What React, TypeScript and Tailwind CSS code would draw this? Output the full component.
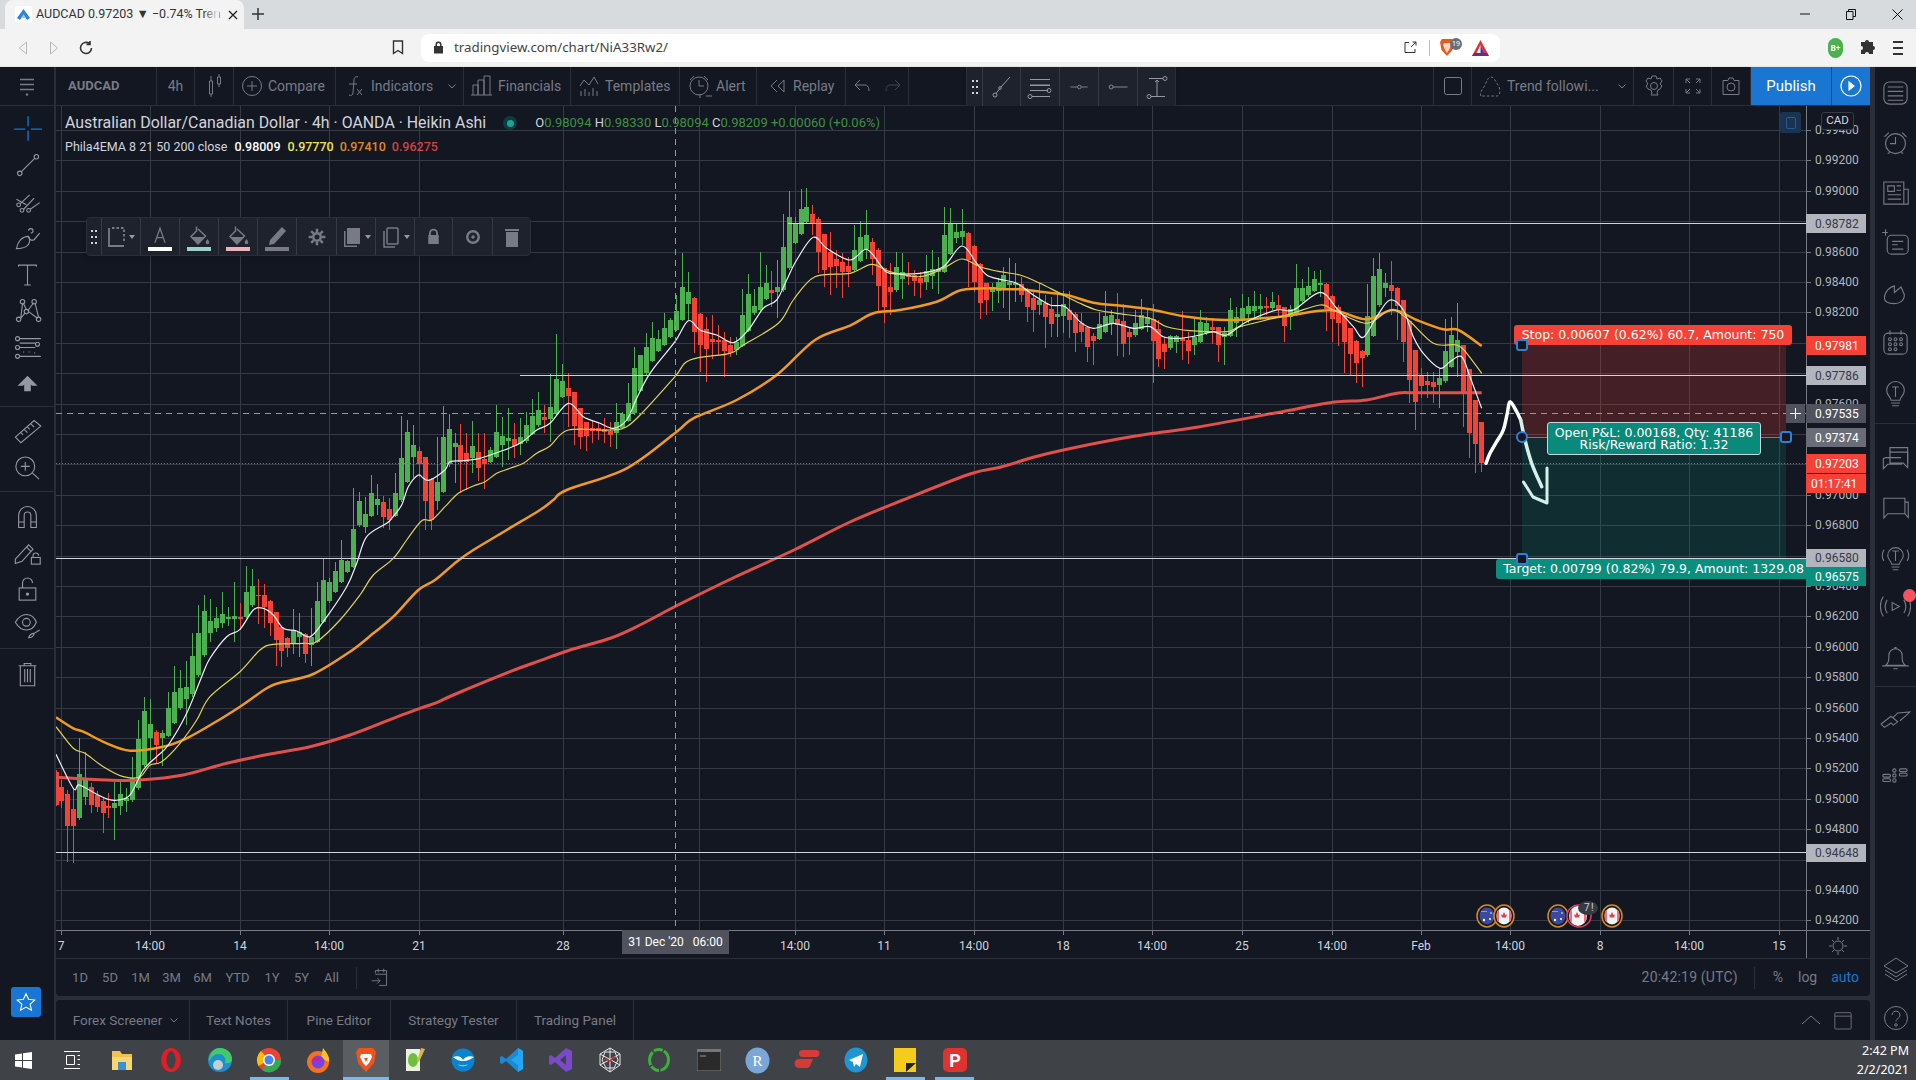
import type { ReactNode } from 'react'

type Pt = [number, number]

// candles are noted as [x, wickTop, bodyTop, bodyBottom, wickBottom, up], in 3x crop units
const leftCandles = [
  [50, 810, 815, 915, 918, 0], [64, 840, 862, 903, 925, 0], [82, 870, 882, 977, 1085, 0], [100, 865, 927, 977, 1090, 0],
  [118, 715, 823, 953, 960, 1], [136, 755, 833, 890, 915, 1], [154, 850, 862, 915, 938, 0], [172, 872, 885, 920, 935, 0],
  [190, 895, 903, 938, 998, 0], [206, 880, 918, 923, 955, 0], [223, 845, 908, 923, 1020, 1], [241, 845, 883, 917, 945, 1],
  [259, 865, 895, 903, 935, 1], [277, 770, 833, 900, 905, 1], [295, 660, 717, 865, 870, 1], [313, 592, 633, 795, 800, 1],
  [331, 597, 672, 715, 780, 1], [349, 690, 695, 735, 790, 0], [367, 690, 700, 714, 798, 1], [385, 575, 625, 707, 712, 1],
  [403, 497, 576, 668, 672, 1], [421, 510, 565, 625, 630, 1], [439, 482, 562, 596, 675, 1], [457, 400, 468, 582, 590, 1],
  [475, 315, 400, 525, 530, 1], [493, 285, 333, 465, 470, 1], [511, 297, 363, 398, 425, 1], [529, 320, 353, 383, 395, 1],
  [547, 277, 343, 368, 385, 1], [565, 320, 351, 356, 378, 1], [583, 247, 348, 357, 425, 1], [601, 310, 351, 356, 390, 0],
  [619, 198, 276, 352, 355, 1], [637, 207, 257, 315, 320, 1], [655, 237, 284, 288, 372, 0], [673, 252, 285, 320, 385, 0],
  [691, 300, 303, 370, 408, 0], [709, 335, 337, 420, 497, 0], [724, 378, 380, 452, 500, 0], [742, 410, 414, 443, 472, 0],
  [760, 327, 390, 432, 462, 1], [778, 340, 396, 412, 472, 1], [796, 400, 403, 462, 488, 0], [814, 323, 410, 435, 497, 1],
  [832, 247, 303, 425, 430, 1], [850, 178, 240, 365, 370, 1], [868, 235, 247, 303, 310, 1], [886, 185, 213, 275, 280, 1],
  [904, 120, 180, 245, 250, 1], [922, 180, 183, 215, 220, 1], [940, -36, 87, 200, 205, 1], [958, -25, 3, 75, 80, 1],
]

const midCandles = [
  [106, 680, 733, 770, 790, 1], [124, 615, 670, 737, 742, 1], [142, 642, 687, 706, 735, 1], [160, 677, 695, 741, 775, 0],
  [178, 685, 717, 750, 780, 0], [196, 610, 670, 737, 742, 1], [214, 438, 565, 690, 695, 1], [232, 450, 487, 635, 640, 1],
  [250, 465, 525, 560, 625, 1], [268, 530, 543, 583, 620, 0], [286, 560, 562, 692, 780, 0], [304, 625, 628, 750, 780, 0],
  [322, 500, 637, 693, 720, 1], [340, 408, 502, 665, 670, 1], [358, 432, 477, 583, 590, 1], [376, 490, 519, 530, 640, 1],
  [392, 462, 525, 575, 670, 0], [410, 490, 549, 575, 660, 0], [428, 453, 528, 565, 610, 1], [446, 490, 547, 595, 632, 0],
  [464, 490, 568, 582, 658, 0], [482, 530, 541, 575, 580, 1], [500, 405, 487, 560, 565, 1], [518, 440, 499, 525, 590, 1],
  [536, 415, 504, 512, 570, 1], [554, 458, 507, 528, 565, 0],
]

const rightCandles = [
  [62, 775, 832, 852, 885, 1], [80, 757, 796, 843, 848, 1], [98, 717, 767, 822, 826, 1], [116, 697, 751, 795, 800, 1],
  [134, 735, 771, 779, 820, 0], [152, 642, 742, 778, 845, 1], [170, 522, 658, 762, 766, 1], [188, 612, 663, 711, 715, 1],
  [206, 640, 685, 708, 800, 0], [224, 696, 697, 798, 855, 0], [242, 745, 745, 830, 868, 0], [260, 786, 787, 827, 872, 0],
  [278, 780, 805, 812, 850, 0], [296, 790, 805, 812, 840, 0], [314, 775, 808, 815, 850, 0], [332, 785, 812, 824, 862, 0],
  [350, 730, 787, 820, 868, 1], [368, 755, 762, 805, 808, 1], [386, 670, 730, 782, 785, 1], [404, 560, 625, 760, 764, 1],
  [422, 590, 585, 692, 696, 1], [440, 518, 561, 640, 644, 1], [458, 485, 535, 602, 606, 1], [476, 510, 538, 572, 576, 1],
  [494, 458, 505, 555, 559, 1], [512, 475, 480, 530, 534, 1], [530, 405, 453, 510, 514, 1], [548, 280, 380, 480, 484, 1],
  [566, 337, 396, 432, 480, 1], [584, 412, 415, 515, 580, 0], [602, 460, 462, 555, 635, 0], [620, 470, 507, 568, 665, 0],
  [638, 465, 538, 546, 598, 0], [656, 495, 541, 545, 585, 0], [674, 515, 541, 573, 650, 0], [692, 530, 555, 580, 590, 0],
  [710, 530, 545, 570, 585, 1], [728, 388, 465, 558, 562, 1], [746, 343, 403, 512, 516, 1], [764, 388, 438, 460, 465, 1],
  [782, 275, 381, 450, 455, 1], [800, 315, 369, 417, 420, 1], [814, 333, 391, 399, 440, 0], [832, 300, 381, 396, 475, 1],
  [850, 163, 262, 390, 395, 1], [868, 93, 171, 325, 330, 1], [886, 170, 190, 248, 252, 1], [904, 87, 147, 221, 225, 1],
  [919, 85, 141, 185, 190, 1], [937, 135, 163, 190, 225, 0], [955, 170, 178, 275, 340, 0], [973, 222, 223, 330, 380, 0],
  [991, 215, 276, 320, 405, 0], [1009, 270, 297, 318, 385, 0], [1027, 280, 307, 337, 415, 0], [1045, 290, 319, 337, 382, 0],
  [1063, 195, 270, 330, 335, 1], [1081, 183, 232, 302, 306, 1], [1099, 150, 225, 268, 298, 1], [1117, 235, 246, 297, 345, 0],
  [1135, 265, 271, 378, 455, 0], [1153, 325, 325, 440, 490, 0], [1171, 310, 381, 396, 465, 0], [1189, 275, 322, 390, 395, 1],
  [1207, 280, 336, 357, 418, 1], [1225, 305, 345, 350, 375, 0], [1243, 330, 346, 362, 408, 0], [1261, 335, 354, 370, 415, 0],
  [1279, 285, 334, 365, 390, 1], [1297, 270, 328, 348, 388, 1], [1315, 290, 328, 336, 402, 1], [1333, 140, 225, 335, 340, 1],
  [1351, 145, 189, 282, 286, 1], [1369, 190, 216, 234, 250, 1], [1387, 148, 213, 230, 255, 1], [1405, 215, 220, 300, 380, 0],
  [1423, 255, 258, 365, 395, 0], [1441, 310, 313, 430, 478, 0], [1459, 370, 369, 421, 465, 0], [1477, 370, 382, 395, 452, 1],
  [1495, 355, 365, 392, 430, 1],
]

const lastCandles = [
  [10, 140, 165, 205, 265, 1], [28, 115, 185, 195, 300, 1], [46, 130, 188, 196, 245, 1], [64, 170, 192, 224, 245, 0],
  [82, 205, 208, 262, 305, 0], [100, 210, 235, 270, 335, 0], [118, 190, 240, 255, 285, 1], [136, 225, 248, 290, 385, 0],
  [154, 230, 268, 312, 350, 0], [172, 222, 283, 290, 350, 1], [190, 212, 253, 288, 340, 1], [208, 212, 270, 300, 355, 0],
  [226, 275, 283, 338, 395, 0], [244, 280, 310, 335, 365, 0], [262, 318, 322, 380, 427, 0], [280, 340, 348, 362, 435, 0],
  [298, 275, 313, 356, 360, 1], [316, 213, 289, 335, 340, 1], [334, 270, 286, 313, 345, 1], [352, 220, 298, 315, 408, 0],
  [370, 252, 304, 371, 412, 0], [388, 320, 337, 350, 405, 0], [406, 270, 308, 344, 350, 1], [424, 238, 286, 326, 330, 1],
  [442, 270, 290, 311, 335, 1], [460, 253, 297, 362, 490, 0], [475, 300, 328, 416, 440, 0], [493, 350, 373, 396, 447, 0],
  [511, 345, 347, 383, 390, 1], [529, 345, 347, 366, 400, 1], [547, 272, 353, 362, 420, 0], [565, 335, 359, 393, 432, 0],
  [583, 295, 350, 376, 405, 1], [601, 270, 307, 366, 370, 1], [619, 290, 309, 339, 345, 1], [637, 295, 322, 330, 372, 0],
  [655, 320, 322, 375, 425, 0], [673, 320, 340, 350, 435, 1], [691, 235, 270, 347, 352, 1], [709, 260, 292, 308, 350, 1],
  [727, 222, 263, 302, 320, 1], [745, 230, 259, 283, 310, 1], [763, 213, 258, 272, 300, 1], [781, 222, 258, 267, 300, 1],
  [799, 230, 259, 264, 285, 0], [817, 217, 246, 265, 270, 1], [835, 225, 256, 270, 295, 0], [853, 260, 262, 318, 365, 0],
  [871, 255, 267, 292, 330, 1], [889, 132, 205, 283, 287, 1], [907, 178, 204, 243, 248, 1], [925, 140, 198, 226, 230, 1],
  [943, 152, 177, 212, 216, 1], [961, 150, 189, 194, 230, 1], [979, 190, 193, 268, 333, 0], [997, 225, 228, 298, 365, 0],
  [1015, 255, 260, 308, 378, 0], [1033, 285, 285, 365, 460, 0], [1051, 325, 325, 402, 465, 0], [1069, 360, 363, 428, 490, 0],
  [1087, 390, 393, 414, 500, 0], [1103, 192, 288, 405, 410, 1], [1121, 113, 168, 348, 352, 1], [1139, 100, 148, 255, 260, 1],
  [1157, 160, 190, 204, 230, 1], [1175, 122, 196, 213, 285, 0], [1193, 202, 203, 258, 360, 0], [1211, 240, 241, 365, 425, 0],
  [1229, 300, 303, 480, 550, 0], [1247, 390, 390, 546, 630, 0], [1265, 445, 468, 497, 535, 0], [1283, 455, 482, 495, 535, 0],
  [1301, 455, 487, 500, 550, 0], [1319, 445, 475, 494, 563, 1], [1337, 297, 393, 484, 488, 1], [1355, 290, 346, 440, 445, 1],
  [1373, 250, 361, 396, 470, 1], [1391, 375, 376, 520, 620, 0], [1409, 448, 448, 640, 715, 0], [1427, 540, 541, 672, 760, 0],
  [1445, 605, 606, 730, 755, 0],
]

const toCandles = (ox: number, oy: number, rows: number[][]) =>
  rows.map(([x, wt, bt, bb, wb, up]) => ({
    x: Math.round(ox + x / 3 - 2.5),
    wt: oy + wt / 3,
    bt: oy + bt / 3,
    bb: oy + bb / 3,
    wb: oy + wb / 3,
    up: up === 1,
  }))

const candles = [
  ...toCandles(40, 500, leftCandles),
  ...toCandles(330, 270, midCandles),
  ...toCandles(500, 160, rightCandles),
  ...toCandles(1000, 220, lastCandles),
]

const pts = (ox: number, oy: number, a: number[]): Pt[] => {
  const out: Pt[] = []
  for (let i = 0; i < a.length; i += 2) out.push([ox + a[i] / 3, oy + a[i + 1] / 3])
  return out
}

// catmull-rom, the ema lines should not look like polylines
const smooth = (p: Pt[]) => {
  let d = `M${p[0][0].toFixed(1)} ${p[0][1].toFixed(1)}`
  for (let i = 0; i < p.length - 1; i++) {
    const a = p[Math.max(i - 1, 0)]
    const b = p[i]
    const c = p[i + 1]
    const e = p[Math.min(i + 2, p.length - 1)]
    d += `C${(b[0] + (c[0] - a[0]) / 6).toFixed(1)} ${(b[1] + (c[1] - a[1]) / 6).toFixed(1)} ${(c[0] - (e[0] - b[0]) / 6).toFixed(1)} ${(c[1] - (e[1] - b[1]) / 6).toFixed(1)} ${c[0].toFixed(1)} ${c[1].toFixed(1)}`
  }
  return d
}

const ema8 = smooth([
  ...pts(40, 500, [48, 763, 100, 865, 118, 855, 175, 885, 205, 898, 235, 900, 270, 885, 310, 810, 350, 770, 385, 735, 440, 640, 485, 530, 510, 475, 560, 410, 600, 388, 640, 330, 670, 325, 700, 345, 730, 385, 770, 393, 810, 410, 850, 365, 920, 260, 950, 190, 980, 110, 1040, 70]),
  ...pts(330, 270, [185, 745, 215, 705, 235, 650, 265, 615, 280, 625, 300, 630, 345, 600, 360, 575, 400, 572, 450, 565, 500, 548]),
  ...pts(500, 160, [60, 850, 110, 810, 150, 790, 205, 730, 250, 770, 300, 790, 340, 805, 380, 780, 410, 715, 450, 640, 525, 545, 565, 482, 600, 510, 650, 525, 700, 548, 745, 510, 790, 445, 830, 420, 860, 360, 890, 300, 940, 232, 980, 265, 1050, 300, 1100, 268, 1145, 320, 1170, 340, 1260, 340, 1330, 320, 1385, 258, 1430, 310, 1460, 345]),
  ...pts(1000, 220, [0, 178, 50, 190, 100, 225, 150, 255, 195, 260, 240, 305, 280, 325, 340, 310, 400, 325, 450, 320, 490, 350, 540, 355, 600, 345, 640, 335, 680, 345, 740, 305, 830, 270, 880, 270, 960, 217, 1010, 265, 1060, 320, 1090, 352, 1130, 290, 1170, 240, 1210, 270, 1240, 350, 1270, 400, 1320, 445, 1350, 425, 1385, 410, 1410, 470, 1445, 565]),
])

const ema21 = smooth([
  ...pts(40, 500, [48, 680, 100, 745, 135, 760, 190, 800, 250, 830, 300, 830, 330, 795, 365, 785, 420, 730, 470, 660, 510, 590, 600, 515, 660, 450, 700, 433, 790, 430, 830, 425, 900, 360, 960, 285, 1000, 225, 1060, 175, 1100, 120]),
  ...pts(330, 270, [275, 752, 305, 750, 345, 710, 385, 670, 430, 648, 465, 635, 500, 610]),
  ...pts(500, 160, [30, 925, 70, 910, 110, 880, 150, 858, 205, 810, 330, 810, 380, 800, 430, 755, 525, 650, 570, 600, 690, 580, 730, 555, 835, 490, 880, 420, 945, 350, 1050, 340, 1115, 313, 1170, 335, 1260, 350, 1330, 325, 1385, 297, 1440, 320]),
  ...pts(1000, 220, [0, 155, 60, 165, 120, 190, 180, 220, 240, 250, 290, 270, 350, 280, 450, 295, 500, 320, 570, 332, 680, 335, 720, 320, 860, 285, 960, 255, 1000, 270, 1100, 310, 1170, 270, 1220, 295, 1300, 370, 1370, 375, 1400, 400, 1445, 460]),
])

const ema50 = smooth([
  ...pts(40, 500, [48, 652, 100, 685, 130, 695, 200, 730, 270, 752, 370, 740, 440, 715, 520, 670, 600, 620, 680, 565, 720, 548, 820, 522, 930, 455, 1000, 400, 1060, 350, 1135, 270, 1185, 240, 1250, 185, 1300, 150, 1400, 90, 1500, 30]),
  ...pts(500, 160, [160, 1020, 200, 990, 380, 925, 530, 815, 580, 775, 710, 720, 830, 645, 945, 540, 1050, 497, 1120, 460, 1200, 450, 1310, 425, 1385, 390, 1480, 385]),
  ...pts(1000, 220, [0, 208, 60, 208, 120, 215, 200, 225, 280, 248, 370, 258, 450, 268, 560, 290, 680, 300, 840, 290, 960, 272, 1020, 275, 1100, 298, 1180, 270, 1250, 300, 1330, 328, 1375, 330, 1445, 378]),
])

const ema200 = smooth([
  ...pts(40, 500, [48, 832, 200, 840, 300, 840, 430, 825, 560, 790, 690, 762, 810, 740, 930, 705, 1060, 655, 1140, 625, 1190, 608, 1240, 585, 1410, 515, 1500, 482]),
  [570, 650], [611, 638], [640, 625], [678, 605], [733, 578], [794, 550], [850, 522], [903, 500], [970, 474],
  ...pts(1000, 220, [0, 742, 100, 712, 190, 690, 350, 658, 460, 640, 590, 622, 830, 578, 990, 548, 1100, 540, 1190, 520, 1250, 518, 1445, 518]),
])

const handDrawn = smooth(pts(1400, 300, [258, 490, 270, 460, 290, 425, 310, 390, 322, 340, 330, 305, 350, 335, 362, 360]))
const handDrawn2 = smooth(pts(1400, 300, [362, 360, 375, 420, 395, 490, 425, 560]))

const gridX = [61, 150, 240, 329, 419, 563, 699, 795, 884, 974, 1063, 1152, 1242, 1332, 1421, 1510, 1600, 1689, 1779]

const priceTicks = Array.from({ length: 27 }, (_, i) => ({
  y: 130 + i * 30.4,
  label: (0.994 - i * 0.002).toFixed(5),
}))

// these sit fully under a price tag
const hiddenLabels = ['0.98800', '0.98000', '0.97800', '0.97400', '0.97200', '0.96600', '0.94600']

const timeTicks: [number, string][] = [
  [61, '7'], [150, '14:00'], [240, '14'], [329, '14:00'], [419, '21'], [563, '28'], [795, '14:00'], [884, '11'],
  [974, '14:00'], [1063, '18'], [1152, '14:00'], [1242, '25'], [1332, '14:00'], [1421, 'Feb'], [1510, '14:00'],
  [1600, '8'], [1689, '14:00'], [1779, '15'],
]

const priceTags = [
  { y: 214, h: 19, label: '0.98782', cls: 'pl-[9px] bg-[#b2b5be] text-[#363a45]' },
  { y: 336, h: 19, label: '0.97981', cls: 'pl-[9px] bg-[#f44336] text-white' },
  { y: 366, h: 19, label: '0.97786', cls: 'pl-[9px] bg-[#b2b5be] text-[#363a45]' },
  { y: 404, h: 19, label: '0.97535', cls: 'pl-[9px] bg-[#50535e] text-white' },
  { y: 428, h: 19, label: '0.97374', cls: 'pl-[9px] bg-[#6a6d78] text-white' },
  { y: 454, h: 19, label: '0.97203', cls: 'pl-[9px] bg-[#f44336] text-white' },
  { y: 474, h: 19, label: '01:17:41', cls: 'pl-[5px] bg-[#f44336] text-white' },
  { y: 549, h: 18, label: '0.96580', cls: 'pl-[9px] bg-[#b2b5be] text-[#363a45]' },
  { y: 567, h: 19, label: '0.96575', cls: 'pl-[9px] bg-[#0a8f7f] text-white' },
  { y: 844, h: 18, label: '0.94648', cls: 'pl-[9px] bg-[#b2b5be] text-[#363a45]' },
]

function Ic({ children, size = 28, className = '' }: { children: ReactNode; size?: number; className?: string }) {
  return (
    <svg width={size} height={size} viewBox="0 0 28 28" fill="none" stroke="currentColor" strokeWidth="1" className={className}>
      {children}
    </svg>
  )
}

function Big({ children, className = '' }: { children: ReactNode; className?: string }) {
  return (
    <Ic size={31} className={className}>
      {children}
    </Ic>
  )
}

function Sep() {
  return <div className="h-px bg-[#2a2e39] w-full shrink-0" />
}

function LeftTools() {
  const tool = 'h-[36.5px] flex items-center justify-center text-[#9598a1] shrink-0'
  const tool2 = 'h-[37px] flex items-center justify-center text-[#9598a1] shrink-0'
  const tool3 = 'h-[36px] flex items-center justify-center text-[#9598a1] shrink-0'
  return (
    <div className="w-[54px] shrink-0 bg-[#131722] flex flex-col">
      <div className="h-[39px] flex items-center justify-center text-[#787b86] border-b border-[#2a2e39]">
        <Ic>
          <path d="M7 7.5h14M7 12.5h14M7 17.5h14" strokeWidth="1.6" />
          <circle cx="14" cy="22.5" r="1.2" fill="currentColor" stroke="none" />
        </Ic>
      </div>
      <div className="pt-[4px] pb-[4px] flex flex-col">
        <div className={tool}>
          <Big className="text-[#1976d2]"><path d="M14.5 3v9M14.5 16v9M2 14.5h10M17 14.5h10" strokeWidth="1.2" /></Big>
        </div>
        <div className={tool}>
          <Big>
            <circle cx="7" cy="22" r="2" /><circle cx="22" cy="7" r="2" /><path d="M8.5 20.5 20.5 8.5" />
          </Big>
        </div>
        <div className={tool}>
          <Big>
            <circle cx="6" cy="17" r="1.7" /><circle cx="9" cy="22" r="1.7" /><circle cx="15" cy="22" r="1.7" />
            <path d="M7.5 16 16 8M10.5 21 20 11M16.5 21 25 15M4 12 13 17" />
          </Big>
        </div>
        <div className={tool}>
          <Big>
            <path d="M4 24c1-6 5-11 11-11 2 3 1 7-2 9-3 2-6 2-9 2Z" />
            <path d="M15 13c0 3 3 4 5 3l5-6M15 8a2 2 0 0 1 4 0c0 1-1 2-2 2" />
          </Big>
        </div>
        <div className={tool}>
          <Big><path d="M6 7V5.5h16V7M14 5.5v18M11 23.5h6" /></Big>
        </div>
        <div className={tool}>
          <Big>
            <circle cx="6" cy="22" r="2" /><circle cx="9.5" cy="6" r="2" /><circle cx="13" cy="15" r="2" /><circle cx="20" cy="6" r="2" /><circle cx="24" cy="22" r="2" />
            <path d="M8 21 12 16M9.5 8 8 20M10 7l3 6M14.5 14l5-7M21 8l3 12M15 15l8 6" />
          </Big>
        </div>
        <div className={tool}>
          <Big>
            <circle cx="5" cy="6" r="1.8" /><circle cx="5" cy="14" r="1.8" /><circle cx="5" cy="22" r="1.8" /><circle cx="23" cy="11" r="1.8" />
            <path d="M7 6h19M7 14h14M7 22h19M7 10h14" />
            <path d="M10 18h1M15 18h1M20 19h1" strokeDasharray="1 2" />
          </Big>
        </div>
        <div className={tool}>
          <Big><path d="M14 7 23 16h-5l-1-1v6h-6v-6l-1 1H5Z" fill="currentColor" stroke="none" /></Big>
        </div>
      </div>
      <Sep />
      <div className="pt-[5px] pb-[5px] flex flex-col">
        <div className={tool2}>
          <Big>
            <path d="M3 20 20 5l6 5L8 25Z" />
            <path d="M8 16l2 2M11 13l3 3M14 11l2 2M17 8l3 3" />
          </Big>
        </div>
        <div className={tool2}>
          <Big>
            <circle cx="12" cy="13" r="8.5" />
            <path d="M12 9v8M8 13h8M18.5 19l6 5.5" />
          </Big>
        </div>
      </div>
      <Sep />
      <div className="pt-[6px] pb-[6px] flex flex-col">
        <div className={tool3}>
          <Big><path d="M6 24V13a8 8 0 0 1 16 0v11h-5V13a3 3 0 0 0-6 0v11ZM6 19h5M17 19h5" /></Big>
        </div>
        <div className={tool3}>
          <Big>
            <path d="M3 20 15 7l4 4-10 11-6 2ZM13 9l4 4" />
            <rect x="17.5" y="18.5" width="8" height="6" /><path d="M19 18.5V17a2.5 2.5 0 0 1 5 0" />
          </Big>
        </div>
        <div className={tool3}>
          <Big>
            <rect x="6.5" y="13.5" width="15" height="11" /><path d="M9.5 13.5V9a4.5 4.5 0 0 1 9 0" />
            <circle cx="14" cy="19" r="1" fill="currentColor" />
          </Big>
        </div>
        <div className={tool3}>
          <Big>
            <path d="M3 12c3-5 7-7 10-7s7 2 9 7c-2 5-6 7-9 7s-7-2-10-7Z" />
            <circle cx="13" cy="12" r="3.5" />
            <path d="M15 26c1-3 3-4 5-4 0 2-2 4-5 4ZM20 22l5-3" />
          </Big>
        </div>
      </div>
      <Sep />
      <div className="pt-[6px] flex flex-col">
        <div className={tool3}>
          <Big><path d="M6 7h16M11 7V5h6v2M7.5 7v18h13V7M11.5 10v12M14 10v12M16.5 10v12" /></Big>
        </div>
      </div>
      <div className="flex-1" />
      <div className="mx-[11px] mb-[23px] w-[30px] h-[30px] bg-[#1976d2] rounded-[3px] flex items-center justify-center text-white">
        <svg width="22" height="22" viewBox="0 0 24 24" fill="none" stroke="currentColor" strokeWidth="1.2">
          <path d="m12 3 2.8 6.1 6.7.8-5 4.5 1.4 6.6-5.9-3.4L6.1 21l1.4-6.6-5-4.5 6.7-.8Z" />
        </svg>
      </div>
    </div>
  )
}

function TopBar() {
  const cell = 'h-full flex items-center border-r border-[#2a2e39] shrink-0'
  return (
    <div className="h-[39px] shrink-0 bg-[#131722] border-b border-[#2a2e39] flex text-[14px] text-[#787b86]">
      <div className={`${cell} w-[101px] pl-[12px] font-bold text-[13px] text-[#787b86]`}>AUDCAD</div>
      <div className={`${cell} w-[38px] justify-center`}>4h</div>
      <div className={`${cell} w-[39px] justify-center`}>
        <Ic><path d="M9.5 9h3v13h-3zM11 4v5M11 22v3M17.5 5h3v7h-3zM19 2v3M19 12v3" /></Ic>
      </div>
      <div className={`${cell} w-[102px] pl-[4px] gap-[2px]`}>
        <Ic><circle cx="14" cy="14" r="9.5" /><path d="M14 9v10M9 14h10" /></Ic>
        <span>Compare</span>
      </div>
      <div className={`${cell} w-[128px] pl-[4px] gap-[3px]`}>
        <Ic><path d="M18 5c-3-1-4 1-4 3l-1 13c0 2-2 3-4 2M9 12h8M17 17l5 6M22 17l-5 6" /></Ic>
        <span>Indicators</span>
        <svg width="8" height="5" viewBox="0 0 8 5" fill="none" stroke="currentColor" className="ml-[12px]"><path d="m.5.5 3.5 3.5 3.5-3.5" /></svg>
      </div>
      <div className={`${cell} w-[107px] pl-[4px] gap-[2px]`}>
        <Ic><path d="M5 23V13h5v10M10 23V8h6v15M16 23V4h6v19M3 23h21" /></Ic>
        <span>Financials</span>
      </div>
      <div className={`${cell} w-[109px] pl-[4px] gap-[2px]`}>
        <Ic><path d="M5 14l4-6 5 5 5-8 4 7M6 24v-5M10 24v-7M14 24v-4M18 24v-8M22 24v-5" /></Ic>
        <span>Templates</span>
      </div>
      <div className={`${cell} w-[77px] pl-[6px] gap-[2px]`}>
        <Ic>
          <circle cx="13" cy="14" r="9" /><path d="M13 8v6h5M4 8l4-4M22 8l-4-4M14 22v4M20 24h6" />
        </Ic>
        <span>Alert</span>
      </div>
      <div className={`${cell} w-[89px] pl-[7px] gap-[1px]`}>
        <Ic><path d="M13 8 7 14l6 6M20 8l-6 6 6 6V8Z" /></Ic>
        <span>Replay</span>
      </div>
      <div className={`${cell} w-[63px] justify-center gap-[1px]`}>
        <Ic><path d="M11 8 6 13l5 5M6 13h10c3 0 4 3 4 6" /></Ic>
        <Ic className="text-[#434651]"><path d="m17 8 5 5-5 5M22 13H12c-3 0-4 3-4 6" /></Ic>
      </div>
      <div className="flex-1" />
      <div className="h-full w-px bg-[#2a2e39]" />
      <div className={`${cell} w-[38px] justify-center`}>
        <Ic><rect x="5.5" y="5.5" width="17" height="17" rx="2" /></Ic>
      </div>
      <div className={`${cell} w-[162px] pl-[4px] gap-[3px]`}>
        <Ic><path d="M5 24c-2-3 2-7 4-11s3-8 6-8 5 5 7 8 3 8 0 11Z" strokeDasharray="2.5 2" /></Ic>
        <span>Trend followi...</span>
        <svg width="8" height="5" viewBox="0 0 8 5" fill="none" stroke="currentColor" className="ml-[16px]"><path d="m.5.5 3.5 3.5 3.5-3.5" /></svg>
      </div>
      <div className={`${cell} w-[40px] justify-center`}>
        <Ic>
          <circle cx="14" cy="14" r="3.5" />
          <path d="M12 4h4l1 3 3-1 2 3-2 3 2 2-2 3-2 1-1 3 1 2h-7l1-2-1-3-3-1-2-3 2-2-2-3 2-3 3 1Z" />
        </Ic>
      </div>
      <div className={`${cell} w-[38px] justify-center`}>
        <Ic><path d="M7 11V7h4M21 11V7h-4M7 17v4h4M21 17v4h-4M7 7l4 4M21 7l-4 4M7 21l4-4M21 21l-4-4" /></Ic>
      </div>
      <div className={`${cell} w-[39px] justify-center`}>
        <Ic><path d="M6 8.5h5l1-2.5h4l1 2.5h5v14H6Z" /><circle cx="14" cy="15" r="4" /></Ic>
      </div>
      <div className="h-full w-[81px] bg-[#1976d2] text-white flex items-center justify-center text-[15px] border-r border-[#0d47a1] shrink-0">Publish</div>
      <div className="h-full w-[38px] bg-[#1976d2] text-white flex items-center justify-center shrink-0">
        <svg width="24" height="24" viewBox="0 0 24 24" fill="none" stroke="currentColor" strokeWidth="1.2">
          <circle cx="12" cy="12" r="10" />
          <path d="M10 8l5 4-5 4Z" fill="currentColor" />
        </svg>
      </div>
    </div>
  )
}

function DrawingBar() {
  const cell = 'h-full flex items-center justify-center border-r border-[#363a45]'
  return (
    <div className="absolute left-[910px] top-[-39px] h-[40px] w-[210px] bg-[#1e222d] rounded-b-[4px] border border-t-0 border-[#2a2e39] flex text-[#9598a1] shadow-md">
      <div className={`${cell} w-[16px]`}>
        <svg width="6" height="14" viewBox="0 0 6 14" fill="#d1d4dc"><rect width="2" height="2" /><rect x="4" width="2" height="2" /><rect y="6" width="2" height="2" /><rect x="4" y="6" width="2" height="2" /><rect y="12" width="2" height="2" /><rect x="4" y="12" width="2" height="2" /></svg>
      </div>
      <div className={`${cell} w-[38px]`}>
        <Ic><circle cx="7" cy="22" r="2" /><circle cx="12" cy="15" r="1.3" /><path d="M8 20.5 11.5 16M13 14 22 4" /></Ic>
      </div>
      <div className={`${cell} w-[39px]`}>
        <Ic><path d="M4 6.5h20M4 12.5h20M4 17.5h18M6 23.5h18M4 12h20" /><circle cx="23" cy="17.5" r="2" /><circle cx="4" cy="23.5" r="2" /></Ic>
      </div>
      <div className={`${cell} w-[39px]`}>
        <Ic size={22}><path d="M3 14h9M17 14h8" /><circle cx="14.5" cy="14" r="2.3" /></Ic>
      </div>
      <div className={`${cell} w-[39px]`}>
        <Ic size={24}><circle cx="6" cy="14" r="2.3" /><path d="M8 14h17" /></Ic>
      </div>
      <div className="h-full flex-1 flex items-center justify-center">
        <Ic><path d="M6 5.5h14M14 7v16M8 23.5h14M12 9l2-2 2 2" /><circle cx="22" cy="5.5" r="2" /><circle cx="6" cy="23.5" r="2" /></Ic>
      </div>
    </div>
  )
}

function Bucket() {
  return (
    <svg width="24" height="24" viewBox="0 0 24 24">
      <path d="M9.500 2.500V7L4 12.500l7 7.500 7.500-8L11 5" fill="none" stroke="currentColor" strokeWidth="1.500" />
      <path d="M4.500 13h13.500L11 20Z" fill="currentColor" />
      <path d="M20.500 15c1 1.500 1.800 2.500 1.800 3.500a1.800 1.800 0 0 1-3.600 0c0-1 .8-2 1.800-3.500Z" fill="currentColor" />
    </svg>
  )
}

function LineToolbar() {
  const cell = 'h-full flex items-center justify-center border-r border-[#363a45]'
  const caret = <span className="ml-[2px] border-x-[3px] border-t-[4px] border-x-transparent border-t-[#9598a1]" />
  return (
    <div className="absolute left-[30px] top-[111px] h-[39px] w-[445px] bg-[#1e222d] rounded-[4px] border border-[#2a2e39] shadow-md flex text-[#787b86]">
      <div className={`${cell} w-[15px]`}>
        <svg width="6" height="14" viewBox="0 0 6 14" fill="#d1d4dc"><rect width="2" height="2" /><rect x="4" width="2" height="2" /><rect y="6" width="2" height="2" /><rect x="4" y="6" width="2" height="2" /><rect y="12" width="2" height="2" /><rect x="4" y="12" width="2" height="2" /></svg>
      </div>
      <div className={`${cell} w-[39px]`}>
        <svg width="20" height="22" viewBox="0 0 20 22" fill="none" stroke="currentColor" strokeWidth="1.800"><path d="M2 2v18h15" /><path d="M5 2h12v14" strokeDasharray="2.500 2" /></svg>
        {caret}
      </div>
      <div className={`${cell} w-[39px] flex-col pt-[2px]`}>
        <Ic size={24}><path d="M8 22 14 5l6 17M10 16h8" strokeWidth="1.5" /></Ic>
        <div className="w-[24px] h-[4px] bg-white mt-[-1px]" />
      </div>
      <div className={`${cell} w-[39px] flex-col pt-[2px]`}>
        <Bucket />
        <div className="w-[24px] h-[4px] bg-[#9fd1c9] mt-[-1px]" />
      </div>
      <div className={`${cell} w-[39px] flex-col pt-[2px]`}>
        <Bucket />
        <div className="w-[24px] h-[4px] bg-[#e8b4bc] mt-[-1px]" />
      </div>
      <div className={`${cell} w-[39px] flex-col pt-[2px]`}>
        <svg width="24" height="24" viewBox="0 0 24 24" fill="currentColor"><path d="M17 3l4 4L9 20l-5 1 1-5Z" /></svg>
        <div className="w-[24px] h-[4px] bg-[#787b86] mt-[-1px]" />
      </div>
      <div className={`${cell} w-[40px]`}>
        <svg width="20" height="20" viewBox="0 0 24 24" fill="none" stroke="currentColor" strokeWidth="3">
          <circle cx="12" cy="12" r="4.500" />
          <path d="M12 2v4M12 18v4M2 12h4M18 12h4M5 5l3 3M16 16l3 3M19 5l-3 3M8 16l-3 3" />
        </svg>
      </div>
      <div className={`${cell} w-[39px]`}>
        <svg width="22" height="24" viewBox="0 0 22 24" fill="currentColor"><path d="M6 3h13v16H6Z" /><path d="M3 6v16h13v-1.500H4.500V6Z" /></svg>
        {caret}
      </div>
      <div className={`${cell} w-[39px]`}>
        <svg width="22" height="24" viewBox="0 0 22 24" fill="none" stroke="currentColor" strokeWidth="1.500"><rect x="7" y="3" width="11" height="16" rx="1" /><path d="M4 6v16h11" /></svg>
        {caret}
      </div>
      <div className={`${cell} w-[38px]`}>
        <svg width="15" height="19" viewBox="0 0 20 22" fill="currentColor"><path d="M4 9V6.500a6 6 0 0 1 12 0V9h1v12H3V9Zm2.500 0h7V6.500a3.500 3.500 0 0 0-7 0Z" /></svg>
      </div>
      <div className={`${cell} w-[40px]`}>
        <svg width="18" height="18" viewBox="0 0 22 22"><circle cx="11" cy="11" r="7" fill="none" stroke="currentColor" strokeWidth="3" /><circle cx="11" cy="11" r="2.200" fill="currentColor" /></svg>
      </div>
      <div className="h-full flex-1 flex items-center justify-center">
        <svg width="20" height="24" viewBox="0 0 20 24" fill="currentColor"><path d="M3 4h14v2H3ZM4 7h12v15H4Z" /></svg>
      </div>
    </div>
  )
}

function Flag({ x, kind }: { x: number; kind: 'au' | 'ca' }) {
  return (
    <g>
      <ellipse cx={x} cy="916" rx="10" ry="11" fill="#131722" stroke="#d68a1f" strokeWidth="1.500" />
      {kind === 'au' ? (
        <g>
          <ellipse cx={x} cy="916" rx="7.500" ry="8.500" fill="#3c4a9e" />
          <path d={`M${x - 6} ${912}h6v-1h-6Z`} fill="#e8798a" />
          <circle cx={x + 3} cy="919" r="1" fill="#fff" />
          <circle cx={x - 3} cy="920" r="1.200" fill="#fff" />
          <circle cx={x + 4} cy="913" r=".8" fill="#fff" />
        </g>
      ) : (
        <g>
          <ellipse cx={x} cy="916" rx="7.500" ry="8.500" fill="#f4f4f4" />
          <path d={`M${x - 7} 911q-1 5 0 10l2 1v-12ZM${x + 7} 911q1 5 0 10l-2 1v-12Z`} fill="#e8707f" />
          <path d={`M${x} 912l1.500 3 1.500-.5-1 3h-4l-1-3 1.500.5Z`} fill="#e53e50" />
        </g>
      )}
    </g>
  )
}

function Chart() {
  return (
    <div className="relative h-[852px] shrink-0 bg-[#131722] overflow-hidden">
      <svg width="1814" height="852" viewBox="56 106 1814 852" className="absolute left-0 top-0">
        <g stroke="#363a45" shapeRendering="crispEdges">
          {priceTicks.map((t) => (
            <line key={t.label} x1="56" x2="1806" y1={Math.round(t.y) + 0.5} y2={Math.round(t.y) + 0.5} />
          ))}
          {gridX.map((x) => (
            <line key={x} x1={x + 0.5} x2={x + 0.5} y1="106" y2="930" />
          ))}
        </g>

        <rect x="1522" y="345" width="264" height="92" fill="#f44336" fillOpacity="0.22" />
        <rect x="1522" y="437" width="264" height="121" fill="#089981" fillOpacity="0.18" />

        <g shapeRendering="crispEdges">
          {candles.map((c, i) => (
            <g key={i} fill={c.up ? '#4caf50' : '#f44336'}>
              <rect x={c.x + 2} y={c.wt} width="1" height={Math.max(c.wb - c.wt, 1)} />
              <rect x={c.x} y={c.bt} width="5" height={Math.max(c.bb - c.bt, 1.5)} />
            </g>
          ))}
        </g>

        <path d={ema200} fill="none" stroke="#e2504c" strokeWidth="3" strokeLinejoin="round" />
        <path d={ema50} fill="none" stroke="#f09a1e" strokeWidth="2.500" strokeLinejoin="round" />
        <path d={ema21} fill="none" stroke="#e4d255" strokeWidth="1.200" strokeLinejoin="round" />
        <path d={ema8} fill="none" stroke="#f0f2f6" strokeWidth="1.200" strokeLinejoin="round" />

        <g stroke="#d1d4dc" shapeRendering="crispEdges">
          <line x1="788" x2="1806" y1="223.500" y2="223.500" />
          <line x1="520" x2="1806" y1="375.500" y2="375.500" />
          <line x1="56" x2="1806" y1="558.500" y2="558.500" />
          <line x1="56" x2="1806" y1="852.500" y2="852.500" />
        </g>
        <line x1="56" x2="1806" y1="463.500" y2="463.500" stroke="#f44336" strokeDasharray="1 2" />
        <line x1="1522" x2="1786" y1="437.500" y2="437.500" stroke="#787b86" />
        <line x1="56" x2="1806" y1="413.500" y2="413.500" stroke="#9598a1" strokeDasharray="6 5" />
        <line x1="675.500" x2="675.500" y1="106" y2="930" stroke="#9598a1" strokeDasharray="6 5" />

        <path d={handDrawn} fill="none" stroke="#ffffff" strokeWidth="3.500" strokeLinecap="round" />
        <path d={handDrawn2} fill="none" stroke="#d4f0ea" strokeWidth="3.500" strokeLinecap="round" />
        <path d="M1523.500 482 1533 497 1547 503 1547 468" fill="none" stroke="#d4f0ea" strokeWidth="3" strokeLinecap="round" strokeLinejoin="round" />

        <Flag x={1487} kind="au" />
        <Flag x={1504} kind="ca" />
        <Flag x={1558} kind="au" />
        <g>
          <ellipse cx="1579" cy="916" rx="12" ry="11" fill="#131722" stroke="#e0405e" strokeWidth="1.500" />
          <ellipse cx="1578" cy="916" rx="9" ry="10" fill="#f4f4f4" />
          <path d="M1570 911q-1 5 0 10l2 1v-12ZM1586 911q1 5 0 10l-2 1v-12Z" fill="#e8707f" />
          <path d="M1577 912l1.500 3 1.500-.5-1 3h-4l-1-3 1.500.5Z" fill="#e53e50" />
          <ellipse cx="1588" cy="908" rx="10" ry="7" fill="#363a45" />
        </g>
        <Flag x={1612} kind="ca" />

        <line x1="56" x2="1870" y1="930.500" y2="930.500" stroke="#787b86" shapeRendering="crispEdges" />
        <line x1="1806.500" x2="1806.500" y1="106" y2="958" stroke="#787b86" shapeRendering="crispEdges" />
        <g stroke="#787b86" shapeRendering="crispEdges">
          {priceTicks.map((t) => (
            <line key={t.label} x1="1807" x2="1811" y1={Math.round(t.y) + 0.5} y2={Math.round(t.y) + 0.5} />
          ))}
          {timeTicks.map(([x, l]) => (
            <line key={`${x}${l}`} x1={x + 0.5} x2={x + 0.5} y1="930" y2="935" />
          ))}
        </g>
        <g fill="none" stroke="#787b86">
          <circle cx="1838" cy="946" r="5" />
          <path d="M1838 937v3M1838 952v3M1829 946h3M1844 946h3M1832 940l2 2M1842 950l2 2M1844 940l-2 2M1834 950l-2 2" />
        </g>
        <text x="1584" y="911" fill="#d1d4dc" fontSize="10" fontFamily="Roboto, sans-serif">7</text>
        <text x="1591" y="911" fill="#d1d4dc" fontSize="10" fontFamily="Roboto, sans-serif">!</text>
      </svg>

      {/* legend */}
      <div className="absolute left-[9px] top-[7px] flex items-center text-[15.900px] text-[#d1d4dc] leading-[20px] whitespace-nowrap">
        <span>Australian Dollar/Canadian Dollar · 4h · OANDA · Heikin Ashi</span>
        <span className="ml-[17px] w-[14px] h-[14px] rounded-full bg-[#0e3b3f] flex items-center justify-center">
          <span className="w-[7px] h-[7px] rounded-full bg-[#1aa394]" />
        </span>
        <span className="ml-[18px] text-[13px] text-[#3f9142]">
          <span className="text-[#d1d4dc]">O</span>0.98094 <span className="text-[#d1d4dc]">H</span>0.98330 <span className="text-[#d1d4dc]">L</span>0.98094 <span className="text-[#d1d4dc]">C</span>0.98209 +0.00060 (+0.06%)
        </span>
      </div>
      <div className="absolute left-[9px] top-[32px] flex text-[12.500px] leading-[18px] whitespace-nowrap text-[#d1d4dc]">
        <span>Phila4EMA 8 21 50 200 close</span>
        <span className="ml-[7px] font-medium text-white">0.98009</span>
        <span className="ml-[7px] font-medium text-[#f2e34c]">0.97770</span>
        <span className="ml-[6px] font-medium text-[#e08a1e]">0.97410</span>
        <span className="ml-[6px] font-medium text-[#d3423c]">0.96275</span>
      </div>

      <LineToolbar />

      {/* axis labels */}
      {priceTicks
        .filter((t) => !hiddenLabels.includes(t.label))
        .map((t) => (
          <div
            key={t.label}
            className="absolute left-[1759px] text-[12px] leading-[14px] text-[#b2b5be]"
            style={{ top: t.y - 106 - 7 }}
          >
            {t.label}
          </div>
        ))}
      {timeTicks.map(([x, l]) => (
        <div
          key={`${x}${l}`}
          className="absolute top-[832px] -translate-x-1/2 text-[12px] leading-[16px] text-[#d1d4dc]"
          style={{ left: x - 56 }}
        >
          {l}
        </div>
      ))}
      {priceTags.map((t) => (
        <div
          key={t.label}
          className={`absolute left-[1750px] w-[60px] flex items-center text-[12px] ${t.cls}`}
          style={{ top: t.y - 106, height: t.h }}
        >
          {t.label}
        </div>
      ))}

      <div className="absolute left-[566px] top-[824px] w-[107px] h-[24px] bg-[#50535e] text-white text-[12px] flex items-center justify-center gap-[9px]">
        <span>31 Dec '20</span>
        <span>06:00</span>
      </div>
      <div className="absolute left-[1730px] top-[298px] w-[19px] h-[19px] bg-[#50535e] flex items-center justify-center text-white">
        <svg width="11" height="11" viewBox="0 0 11 11" stroke="currentColor"><path d="M5.500 0v11M0 5.500h11" /></svg>
      </div>

      {/* position tool labels */}
      <div className="absolute left-[1458px] top-[219px] w-[278px] h-[20px] bg-[#f44336] rounded-[3px] flex items-center justify-center text-white text-[12.500px] whitespace-nowrap [font-family:'DejaVu_Sans',sans-serif]">
        Stop: 0.00607 (0.62%) 60.7, Amount: 750
      </div>
      <div className="absolute left-[1491px] top-[316px] w-[214px] h-[33px] bg-[#0a8a7b] border border-[#d1d4dc] rounded-[3px] flex flex-col items-center justify-center text-white text-[12.500px] leading-[12px] whitespace-nowrap [font-family:'DejaVu_Sans',sans-serif]">
        <span>Open P&amp;L: 0.00168, Qty: 41186</span>
        <span>Risk/Reward Ratio: 1.32</span>
      </div>
      <div className="absolute left-[1440px] top-[453px] w-[310px] h-[20px] bg-[#0a8f7f] rounded-l-[3px] flex items-center justify-end pr-[2px] text-white text-[12.500px] whitespace-nowrap [font-family:'DejaVu_Sans',sans-serif]">
        Target: 0.00799 (0.82%) 79.9, Amount: 1329.08
      </div>

      {/* handles sit over the labels */}
      <svg width="1814" height="852" viewBox="56 106 1814 852" className="absolute left-0 top-0 pointer-events-none">
        <g fill="#131722" stroke="#2f7fd6" strokeWidth="2">
          <rect x="1517" y="340" width="10" height="10" rx="2" />
          <rect x="1781" y="432" width="10" height="10" rx="2" />
          <rect x="1517" y="554" width="10" height="10" rx="2" />
          <circle cx="1522" cy="437" r="5" />
        </g>
      </svg>

      {/* currency + selection button */}
      <div className="absolute left-[1724px] top-[6px] w-[21px] h-[21px] bg-[#1a3350] rounded-[2px] flex items-center justify-center text-[#2a5a90]">
        <svg width="12" height="14" viewBox="0 0 12 14" fill="none" stroke="currentColor"><rect x="1.500" y="1.500" width="9" height="11" rx="1.500" /></svg>
      </div>
      <div className="absolute left-[1765px] top-[6px] w-[33px] h-[18px] bg-[#131722] border border-[#363a45] rounded-[3px] flex items-center justify-center text-[#d1d4dc] text-[11.500px]">CAD</div>
    </div>
  )
}

function RangeBar() {
  const ranges: [string, string][] = [
    ['1D', 'w-[30px]'], ['5D', 'w-[30px]'], ['1M', 'w-[31px]'], ['3M', 'w-[31px]'], ['6M', 'w-[31px]'],
    ['YTD', 'w-[39px]'], ['1Y', 'w-[30px]'], ['5Y', 'w-[29px]'], ['All', 'w-[31px]'],
  ]
  return (
    <div className="h-[38px] shrink-0 bg-[#131722] border-t border-[#2a2e39] rounded-b-[4px] flex items-center text-[13px] text-[#787b86]">
      <div className="pl-[9px] flex">
        {ranges.map(([r, w]) => (
          <span key={r} className={`${w} text-center`}>{r}</span>
        ))}
      </div>
      <div className="ml-[9px] w-px h-[22px] bg-[#2a2e39]" />
      <div className="ml-[11px] text-[#787b86]">
        <Ic size={26}><path d="M8 9V6h12v16h-8M8 10h12M11 4v4M17 4v4M4 17h9M10 14l3 3-3 3" /></Ic>
      </div>
      <div className="flex-1" />
      <span className="text-[14px] tracking-[.2px]">20:42:19 (UTC)</span>
      <div className="ml-[16px] w-px h-[22px] bg-[#2a2e39]" />
      <span className="ml-[18px] text-[14px]">%</span>
      <span className="ml-[15px] text-[14px]">log</span>
      <span className="ml-[14px] mr-[11px] text-[14px] text-[#1976d2]">auto</span>
    </div>
  )
}

function BottomTabs() {
  const tab = 'h-full flex items-center border-r border-[#2a2e39] justify-center'
  return (
    <div className="h-[40px] shrink-0 bg-[#131722] rounded-t-[4px] flex text-[13.500px] text-[#787b86]">
      <div className={`${tab} w-[134px] pl-[6px] gap-[8px]`}>
        <span>Forex Screener</span>
        <svg width="8" height="5" viewBox="0 0 8 5" fill="none" stroke="currentColor"><path d="m.5.5 3.5 3.5 3.5-3.5" /></svg>
      </div>
      <div className={`${tab} w-[98px]`}>Text Notes</div>
      <div className={`${tab} w-[103px]`}>Pine Editor</div>
      <div className={`${tab} w-[126px]`}>Strategy Tester</div>
      <div className={`${tab} w-[117px]`}>Trading Panel</div>
      <div className="flex-1" />
      <div className="mr-[15px] flex items-center gap-[10px]">
        <svg width="20" height="10" viewBox="0 0 20 10" fill="none" stroke="currentColor"><path d="m1 9 9-8 9 8" /></svg>
        <Ic size={24}><rect x="4.500" y="5.500" width="19" height="19" rx="1" /><path d="M4.500 9.500h19" /></Ic>
      </div>
    </div>
  )
}

function RightTools() {
  const tool = 'h-[50px] flex items-center justify-center text-[#787b86]'
  const tool2 = 'h-[52px] flex items-center justify-center text-[#787b86]'
  return (
    <div className="w-[41px] shrink-0 bg-[#131722] flex flex-col">
      <div className={tool}>
        <Big><rect x="3.500" y="4.500" width="21" height="20" rx="5" /><path d="M7 9h14M7 13h14M7 17h14M7 21h14" /></Big>
      </div>
      <div className={tool}>
        <Big><circle cx="14" cy="15" r="9" /><path d="M14 9v6h-5M4 9l4-4M24 9l-4-4M7 24l2-1M21 24l-2-1" /></Big>
      </div>
      <div className={tool}>
        <Big><path d="M3.500 4.500h18v20h-18ZM21.500 11h4v13.500h-4M7 8h6v5H7ZM15 8h4M15 12h4M7 16h12M7 20h12" /></Big>
      </div>
      <div className={tool}>
        <Big><rect x="6.500" y="7.500" width="19" height="17" rx="4" /><path d="M2 5h5M5 2v6M11 13h10M11 16h5M11 20h10" /></Big>
      </div>
      <div className={tool}>
        <Big><path d="M4 19c0-6 5-10 9-11v6l6-5 3 7c0 6-5 8-9 8s-9-1-9-5Z" /></Big>
      </div>
      <div className={tool}>
        <Big>
          <rect x="3.500" y="5.500" width="21" height="19" rx="4" />
          <path d="M9 3v4M19 3v4" />
          <g fill="none"><circle cx="9" cy="11" r="1.300" /><circle cx="14" cy="11" r="1.300" /><circle cx="19" cy="11" r="1.300" /><circle cx="9" cy="15.500" r="1.300" /><circle cx="14" cy="15.500" r="1.300" /><circle cx="19" cy="15.500" r="1.300" /><circle cx="9" cy="20" r="1.300" /><circle cx="14" cy="20" r="1.300" /></g>
        </Big>
      </div>
      <div className={tool}>
        <Big><path d="M10 21c0-3-4-4-4-9a8 8 0 0 1 16 0c0 5-4 6-4 9ZM10 23.500h8M11 26h6M11 9h6M14 9v9" /></Big>
      </div>
      <div className="h-[6px]" />
      <Sep />
      <div className="h-[7px]" />
      <div className={tool}>
        <Big><path d="M9 10h13l3 0v14l-4-4H9ZM19 15H5l-2 1v9l4-4h13" /><path d="M9 10V6h16v14" /></Big>
      </div>
      <div className={tool}>
        <Big><path d="M3.500 6.500h19v14H7l-3.500 4ZM22.500 10h3v14l-3-3.500" /></Big>
      </div>
      <div className={tool}>
        <Big>
          <path d="M10.500 21c0-3-3.500-4-3.500-8a7 7 0 0 1 14 0c0 4-3.500 5-3.500 8ZM10.500 23.500h7M11.500 26h5M11 9h6M14 9v9" />
          <path d="M3.500 8c-2 4-2 7 0 10M24.500 8c2 4 2 7 0 10" />
        </Big>
      </div>
      <div className="relative">
        <div className={tool}>
          <Big>
            <path d="M11 10.500v7l6.500-3.500Z" />
            <path d="M6.500 8c-2.500 4-2.500 8 0 12M21.500 8c2.500 4 2.500 8 0 12M3 5c-3.500 5-3.500 13 0 18M25 5c3.500 5 3.500 13 0 18" />
          </Big>
        </div>
        <span className="absolute right-[0px] top-[8px] w-[13px] h-[13px] rounded-full bg-[#f7525f]" />
      </div>
      <div className={tool}>
        <Big><path d="M5 22c3-2 3-5 3-9a6 6 0 0 1 12 0c0 4 0 7 3 9ZM2 22.500h24M12 25h4M13 6h2" /></Big>
      </div>
      <div className="h-[5px]" />
      <Sep />
      <div className="h-[5px]" />
      <div className={tool2}>
        <Big><path d="m1 19 9-7 6 5-4 3-2-2-6 4ZM12 13l4-4 11-1-3 3-6 5" /></Big>
      </div>
      <div className={tool2}>
        <svg width="31" height="31" viewBox="0 0 28 28" fill="none" stroke="currentColor">
          <rect x="2.500" y="17.500" width="7" height="2.500" rx="1.200" /><rect x="2.500" y="21.500" width="7" height="2.500" rx="1.200" />
          <circle cx="13" cy="14" r="1.500" /><circle cx="13" cy="18.500" r="1.500" /><circle cx="13" cy="23" r="1.500" />
          <rect x="17.500" y="12.500" width="7" height="2.500" rx="1.200" /><rect x="17.500" y="16.500" width="7" height="2.500" rx="1.200" />
        </svg>
      </div>
      <div className="flex-1" />
      <div className="h-[40px] flex items-center justify-center text-[#787b86]">
        <Ic><path d="M14 3 26 11 14 18 2 11ZM3 15l11 7 11-7M3 19l11 7 11-7" /></Ic>
      </div>
      <div className="mt-[15px] mb-[8px] flex items-center justify-center text-[#787b86]">
        <svg width="28" height="28" viewBox="0 0 28 28" fill="none" stroke="currentColor">
          <circle cx="14" cy="14" r="11.500" />
          <path d="M10 11a4 4 0 1 1 6 3.500c-1.500 1-2 1.500-2 3" />
          <circle cx="14" cy="21" r="1.300" />
        </svg>
      </div>
    </div>
  )
}

function ChromeBar() {
  return (
    <>
      <div className="h-[29px] bg-[#d7dbde] flex items-end relative">
        <div className="ml-[5px] w-[239px] h-[29px] bg-[#f3f3f3] rounded-t-[8px] flex items-center pl-[10px]">
          <div className="w-[17px] h-[17px] bg-white rounded-[2px] flex items-center justify-center">
            <svg width="15" height="13" viewBox="0 0 15 13"><path d="M7.500 1 14 10l-3 2-3.500-5L4 12l-3-2Z" fill="#2a86d8" /><path d="M7.500 6 10 10H5Z" fill="#8fc5f2" /></svg>
          </div>
          <div className="relative ml-[4px] w-[183px] shrink-0">
            <span className="block whitespace-nowrap text-[12.500px] text-[#333] [font-family:Roboto,sans-serif]">AUDCAD 0.97203 ▼ −0.74% Tren</span>
            <div className="absolute right-0 top-0 bottom-0 w-[16px] bg-gradient-to-r from-transparent to-[#f3f3f3]" />
          </div>
          <svg width="10" height="10" viewBox="0 0 10 10" stroke="#222" strokeWidth="1.300" className="ml-[9px]"><path d="m1 1 8 8M9 1 1 9" /></svg>
        </div>
        <svg width="12" height="12" viewBox="0 0 12 12" stroke="#333" strokeWidth="1.500" className="ml-[8px] mb-[9px]"><path d="M6 0v12M0 6h12" /></svg>
        <div className="flex-1" />
        <svg width="10" height="2" viewBox="0 0 10 2" className="mb-[14px] mr-[36px]"><path d="M0 1h10" stroke="#111" /></svg>
        <svg width="10" height="11" viewBox="0 0 10 11" fill="none" stroke="#111" className="mb-[9px] mr-[36px]"><path d="M.5 2.500h6.500v8H.5ZM2.500 2.500v-2h7v7H7" /></svg>
        <svg width="11" height="11" viewBox="0 0 11 11" stroke="#111" className="mb-[9px] mr-[13px]"><path d="m.5.5 10 10M10.500.5l-10 10" /></svg>
      </div>
      <div className="h-[38px] bg-[#f3f3f3] flex items-center border-b border-[#e5e5e5] [font-family:'Noto_Sans',sans-serif]">
        <svg width="10" height="14" viewBox="0 0 10 14" fill="none" stroke="#b8b8b8" className="ml-[18px]"><path d="M8.500 1 1.500 7l7 6Z" /></svg>
        <svg width="10" height="14" viewBox="0 0 10 14" fill="none" stroke="#b8b8b8" className="ml-[21px]"><path d="m1.500 1 7 6-7 6Z" /></svg>
        <svg width="16" height="16" viewBox="0 0 16 16" fill="none" stroke="#333" strokeWidth="1.600" className="ml-[19px]"><path d="M13.500 8a5.500 5.500 0 1 1-2-4.300M12 1v3.500H8.500" /></svg>
        <svg width="12" height="15" viewBox="0 0 12 15" fill="none" stroke="#333" strokeWidth="1.400" className="ml-[298px]"><path d="M1.500 1h9v12.500L6 10.500l-4.500 3Z" /></svg>
        <div className="ml-[17px] w-[1079px] h-[28px] bg-white rounded-[8px] flex items-center">
          <svg width="11" height="13" viewBox="0 0 11 13" className="ml-[12px]"><path d="M2.500 5V3.500a3 3 0 0 1 6 0V5H10v7.500H1V5Zm1.500 0h3V3.500a1.500 1.500 0 0 0-3 0Z" fill="#333" /></svg>
          <span className="ml-[10px] text-[13.300px] text-[#444]">tradingview.com/chart/NiA33Rw2/</span>
          <div className="flex-1" />
          <svg width="13" height="13" viewBox="0 0 13 13" fill="none" stroke="#333"><path d="M5 1.500H1v10h10V8M7 6l5-5M8.500 1H12v3.500" /></svg>
          <div className="ml-[12px] w-px h-[16px] bg-[#bbb]" />
          <svg width="16" height="19" viewBox="0 0 16 19" className="ml-[9px]"><path d="M3 1h10l2 3-1.500 8-5.500 6-5.500-6L1 4Z" fill="#e8591c" /><path d="M5 5h6l1 2-2 5-2 3-2-3-2-5Z" fill="#f7d7c4" /></svg>
          <span className="ml-[-5px] mt-[-8px] w-[12px] h-[12px] rounded-full bg-[#6a6d78] text-white text-[7px] leading-[12px] text-center">19</span>
          <svg width="19" height="18" viewBox="0 0 19 18" className="ml-[9px] mr-[10px]"><path d="M9.500 1 18 17H1Zm0 5-4 8h8Z" fill="#e0312c" /><path d="M9.500 6v8h4Z" fill="#662d91" /><path d="M1 17h17l-2-3H3Z" fill="#662d91" /></svg>
        </div>
        <div className="flex-1" />
        <span className="w-[15px] h-[20px] rounded-full bg-[#4caf50] text-white text-[8px] font-bold flex items-center justify-center">B+</span>
        <svg width="15" height="15" viewBox="0 0 15 15" fill="#333" className="ml-[17px]"><path d="M5 2a2 2 0 0 1 4 0h4v4a2 2 0 0 1 0 4v4H9a2 2 0 0 0-4 0H1v-4a2 2 0 0 0 0-4V2Z" /></svg>
        <svg width="10" height="14" viewBox="0 0 10 14" fill="#333" className="ml-[18px] mr-[13px]"><rect width="10" height="2" /><rect y="6" width="10" height="2" /><rect y="12" width="10" height="2" /></svg>
      </div>
    </>
  )
}

function Taskbar() {
  const item = 'w-[49.200px] h-full flex items-center justify-center shrink-0 relative'
  const under = 'absolute bottom-0 left-[5px] right-[5px] h-[3px] bg-[#76b9ed]'
  return (
    <div className="h-[40px] bg-[#3f4347] flex items-center overflow-hidden">
      <div className="w-[47px] h-full flex items-center justify-center shrink-0">
        <svg width="17" height="17" viewBox="0 0 17 17" fill="#fff"><path d="M0 2.500 7 1.500v6.500H0ZM8 1.300 17 0v8H8ZM0 9h7v6.500L0 14.500ZM8 9h9v8l-9-1.300Z" /></svg>
      </div>
      <div className="w-[50px] h-full flex items-center justify-center shrink-0">
        <svg width="16" height="20" viewBox="0 0 16 20" fill="none" stroke="#fff"><path d="M0 1.500h16M0 18.500h16M2.500 5.500h8v9h-8ZM13.500 5.500h2.500M13.500 14.500h2.500M13.500 9.500h2.500" /></svg>
      </div>
      <div className={item}>
        <svg width="24" height="24" viewBox="0 0 24 24"><path d="M2 3h8l2 3h10v16H2Z" fill="#f2c14e" /><rect x="2" y="9" width="20" height="13" fill="#f7d774" /><rect x="8" y="14" width="8" height="8" fill="#3f8fd2" /></svg>
      </div>
      <div className={item}>
        <svg width="24" height="26" viewBox="0 0 24 26"><ellipse cx="12" cy="13" rx="10" ry="12" fill="#e01e26" /><ellipse cx="12" cy="13" rx="4.500" ry="9" fill="#3f4347" /></svg>
      </div>
      <div className={item}>
        <svg width="26" height="26" viewBox="0 0 26 26"><circle cx="13" cy="13" r="12" fill="#1b8fd0" /><path d="M13 1c7 0 12 5 12 11 0 4-4 5-7 4 2-5-2-9-6-9-5 0-8 3-10 8C2 7 6 1 13 1Z" fill="#43c86a" /><circle cx="11" cy="18" r="5" fill="#c8ccd0" /></svg>
      </div>
      <div className={item}>
        <svg width="26" height="26" viewBox="0 0 26 26"><circle cx="13" cy="13" r="12" fill="#ea4335" /><path d="M13 13 2.500 19A12 12 0 0 1 5 4Z" fill="#fbbc05" /><path d="M13 13h12a12 12 0 0 1-19 10Z" fill="#34a853" /><circle cx="13" cy="13" r="6" fill="#fff" /><circle cx="13" cy="13" r="4.500" fill="#4285f4" /></svg>
        <div className={under} />
      </div>
      <div className={item}>
        <svg width="26" height="26" viewBox="0 0 26 26"><circle cx="13" cy="15" r="11" fill="#f5701f" /><path d="M18 1c3 4 7 8 6 14l-8-4Z" fill="#ffbd2e" /><circle cx="13" cy="15" r="6.500" fill="#7542e5" /><path d="M7 13c2-2 6-3 10-1-3 1-7 3-10 1Z" fill="#e31587" /></svg>
      </div>
      <div className="w-[46px] h-full bg-[#5a5e62] flex items-center justify-center shrink-0 relative">
        <svg width="22" height="26" viewBox="0 0 22 26"><path d="M4 1h14l3 4-2 11-8 9-8-9L1 5Z" fill="#f0531c" /><path d="M6 7h10l1 3-3 6-3 3-3-3-3-6Z" fill="#fff" /><path d="M9 11h4l-2 4Z" fill="#f0531c" /></svg>
        <div className="absolute bottom-0 left-0 right-0 h-[3px] bg-[#76b9ed]" />
      </div>
      <div className={item}>
        <svg width="24" height="26" viewBox="0 0 24 26"><rect x="4" y="2" width="14" height="22" fill="#e8f2dc" /><ellipse cx="11" cy="13" rx="5" ry="7" fill="#6fbf3f" /><path d="M19 1 15 14l2 1 6-13Z" fill="#d9b44a" /></svg>
      </div>
      <div className={item}>
        <svg width="24" height="24" viewBox="0 0 24 24"><circle cx="12" cy="12" r="11.500" fill="#0a84d0" /><path d="M2 9c5-2 9 0 10 3 2-3 6-5 11-3-3 2-6 4-11 4S5 11 2 9Z" fill="#fff" /><path d="M7 16c3 2 7 2 10 0-2 3-8 3-10 0Z" fill="#fff" /></svg>
      </div>
      <div className={item}>
        <svg width="24" height="26" viewBox="0 0 24 26"><path d="M18 1 23 4v18l-5 3L6 14l-4 3-2-1v-6l2-1 4 3Z" fill="#1a8ad4" /><path d="M18 1 23 4v18l-5 3V18L11 13l7-5Z" fill="#26a6f0" /></svg>
      </div>
      <div className={item}>
        <svg width="24" height="26" viewBox="0 0 24 26"><path d="M17 1 23 4v18l-6 3L6 15l-4 3-2-1V9l2-1 4 3Z" fill="#7a4bc8" /><path d="M17 8v10l-6-5Z" fill="#3f4347" /></svg>
      </div>
      <div className={item}>
        <svg width="24" height="26" viewBox="0 0 24 26" fill="none" stroke="#e8e8e8"><path d="M12 1 22 7v11l-10 7L2 18V7ZM12 1v24M2 7l20 11M22 7 2 18M7 5l-3 8 4 8h8l4-8-3-8Z" /><path d="M6 13c3-3 5 3 7 0s3-2 5-3" stroke="#d02b2b" strokeWidth="1.500" /></svg>
      </div>
      <div className={item}>
        <svg width="24" height="26" viewBox="0 0 24 26" fill="none" stroke="#3fae3a" strokeWidth="3"><ellipse cx="12" cy="13" rx="9.500" ry="10.500" strokeDasharray="14 1.500 9 1.500" /></svg>
      </div>
      <div className={item}>
        <svg width="24" height="22" viewBox="0 0 24 22"><rect width="24" height="22" rx="1" fill="#2a2a2a" stroke="#888" /><rect y="0" width="24" height="3" fill="#777" /><path d="M3 7h6" stroke="#999" /></svg>
      </div>
      <div className={item}>
        <svg width="25" height="27" viewBox="0 0 25 27"><ellipse cx="12.500" cy="13.500" rx="12" ry="13" fill="#7ba7d6" /><text x="12.500" y="19" textAnchor="middle" fontSize="15" fontFamily="'Liberation Serif', serif" fill="#fff">R</text></svg>
      </div>
      <div className={item}>
        <svg width="26" height="24" viewBox="0 0 26 24" fill="#d83a3a"><path d="M8 2h14a3 3 0 0 1 0 7H9a3.500 3.500 0 0 1-1-7ZM5 11h14l-3 7a4 4 0 0 1-3 2H5a4.500 4.500 0 0 1 0-9Z" /></svg>
      </div>
      <div className={item}>
        <svg width="24" height="26" viewBox="0 0 24 26"><ellipse cx="12" cy="13" rx="11.500" ry="12.500" fill="#1f96d3" /><path d="M5 13 19 7l-3 13-4-3-2 3-1-5Z" fill="#fff" /></svg>
      </div>
      <div className={item}>
        <svg width="24" height="26" viewBox="0 0 24 26"><rect x="1" y="1" width="22" height="24" fill="#f5cc1b" /><path d="M13 25v-9h10Z" fill="#222" /></svg>
        <div className={under} />
      </div>
      <div className={item}>
        <svg width="26" height="26" viewBox="0 0 26 26"><rect x="1" y="1" width="24" height="24" rx="5" fill="#e0322f" /><text x="13" y="20" textAnchor="middle" fontSize="18" fontWeight="700" fontFamily="Roboto, sans-serif" fill="#fff">P</text></svg>
        <div className={under} />
      </div>
      <div className="flex-1" />
      <div className="pr-[7px] text-right text-white text-[12.500px] leading-[19px] [font-family:'Noto_Sans',sans-serif]">
        <div>2:42 PM</div>
        <div>2/2/2021</div>
      </div>
    </div>
  )
}

export default function App() {
  return (
    <div className="w-[1916px] h-[1080px] overflow-hidden bg-[#2a2e39] [font-family:Roboto,sans-serif]">
      <ChromeBar />
      <div className="h-[973px] flex">
        <LeftTools />
        <div className="w-[2px] shrink-0" />
        <div className="w-[1814px] shrink-0 flex flex-col">
          <TopBar />
          <div className="relative">
            <DrawingBar />
          </div>
          <Chart />
          <RangeBar />
          <div className="h-[4px] shrink-0" />
          <BottomTabs />
        </div>
        <div className="w-[5px] shrink-0" />
        <RightTools />
      </div>
      <Taskbar />
    </div>
  )
}
